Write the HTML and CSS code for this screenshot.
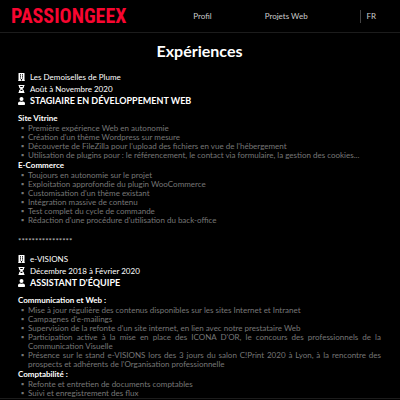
FILE: index.html
```html
<!DOCTYPE html>
<html lang="fr">
<head>
<meta charset="utf-8">
<meta name="viewport" content="width=device-width, initial-scale=1">
<title>PassionGeex</title>
<link rel="stylesheet" href="styles.css">
</head>
<body>
<svg class="sprite" aria-hidden="true">
  <symbol id="building" viewBox="0 0 448 512"><path fill-rule="evenodd" d="M436 480h-20V24c0-13-11-24-24-24H56C43 0 32 11 32 24v456H12c-7 0-12 5-12 12v20h448v-20c0-7-5-12-12-12zM128 76h64v64h-64zM256 76h64v64h-64zM128 180h64v64h-64zM256 180h64v64h-64zM128 284h64v64h-64zM256 284h64v64h-64zM186 384h76v96h-76z"/></symbol>
  <symbol id="hourglass" viewBox="0 0 384 512"><path fill-rule="evenodd" d="M360 0H24C11 0 0 11 0 24v16c0 13 11 24 24 24 0 91 51 167 121 192C75 281 24 357 24 448c-13 0-24 11-24 24v16c0 13 11 24 24 24h336c13 0 24-11 24-24v-16c0-13-11-24-24-24 0-91-51-167-121-192 70-25 121-101 121-192 13 0 24-11 24-24V24c0-13-11-24-24-24zM267 384H117c17-46 47-80 75-80s58 33 75 80zM267 128H117c-8-20-12-42-12-64h174c0 22-4 44-12 64z"/></symbol>
  <symbol id="user" viewBox="0 0 448 512"><path d="M224 256a128 128 0 1 0 0-256 128 128 0 0 0 0 256zm90 32h-17a174 174 0 0 1-146 0h-17C60 288 0 348 0 422v42c0 27 21 48 48 48h352c27 0 48-21 48-48v-42c0-74-60-134-134-134z"/></symbol>
</svg>
<header class="topbar">
  <a class="logo" href="#">PASSIONGEEX</a>
  <nav class="nav">
    <a href="#">Profil</a>
    <a href="#">Projets Web</a>
  </nav>
  <a class="lang" href="#">FR</a>
</header>
<main class="page">
  <h1>Expériences</h1>
  <section class="job">
    <p class="meta"><svg class="icon"><use href="#building"/></svg>Les Demoiselles de Plume</p>
    <p class="meta"><svg class="icon"><use href="#hourglass"/></svg>Août à Novembre 2020</p>
    <h2 class="role"><svg class="icon"><use href="#user"/></svg>STAGIAIRE EN DÉVELOPPEMENT WEB</h2>
    <div class="tasks">
      <h3>Site Vitrine</h3>
      <ul>
        <li>Première expérience Web en autonomie</li>
        <li>Création d'un thème Wordpress sur mesure</li>
        <li>Découverte de FileZilla pour l'upload des fichiers en vue de l'hébergement</li>
        <li>Utilisation de plugins pour : le référencement, le contact via formulaire, la gestion des cookies...</li>
      </ul>
      <h3>E-Commerce</h3>
      <ul>
        <li>Toujours en autonomie sur le projet</li>
        <li>Exploitation approfondie du plugin WooCommerce</li>
        <li>Customisation d'un thème existant</li>
        <li>Intégration massive de contenu</li>
        <li>Test complet du cycle de commande</li>
        <li>Rédaction d'une procédure d'utilisation du back-office</li>
      </ul>
    </div>
  </section>
  <p class="separator">****************</p>
  <section class="job">
    <p class="meta"><svg class="icon"><use href="#building"/></svg>e-VISIONS</p>
    <p class="meta"><svg class="icon"><use href="#hourglass"/></svg>Décembre 2018 à Février 2020</p>
    <h2 class="role"><svg class="icon"><use href="#user"/></svg>ASSISTANT D'ÉQUIPE</h2>
    <div class="tasks">
      <h3>Communication et Web :</h3>
      <ul>
        <li>Mise à jour régulière des contenus disponibles sur les sites Internet et Intranet</li>
        <li>Campagnes d'e-mailings</li>
        <li>Supervision de la refonte d'un site internet, en lien avec notre prestataire Web</li>
        <li>Participation active à la mise en place des ICONA D'OR, le concours des professionnels de la Communication Visuelle</li>
        <li>Présence sur le stand e-VISIONS lors des 3 jours du salon C!Print 2020 à Lyon, à la rencontre des prospects et adhérents de l'Organisation professionnelle</li>
      </ul>
      <h3>Comptabilité :</h3>
      <ul>
        <li>Refonte et entretien de documents comptables</li>
        <li>Suivi et enregistrement des flux</li>
      </ul>
    </div>
  </section>
</main>
<footer class="footer"></footer>
</body>
</html>
```

FILE: styles.css
```css
* {
  box-sizing: border-box;
  margin: 0;
  padding: 0;
}

body {
  display: flex;
  flex-direction: column;
  height: 100vh;
  overflow: hidden;
  background: #000;
  color: #fff;
  font: 8px/9px Lato, "Liberation Sans", sans-serif;
}

a {
  color: inherit;
  text-decoration: none;
}

.sprite {
  display: none;
}

.topbar {
  display: flex;
  flex: none;
  align-items: center;
  padding: 6px 24px 6px 11px;
  border-bottom: 1px solid #1c1c1c;
  color: #ccc;
}

.logo {
  color: #f80630;
  font: bold 20px/20px "Roboto Condensed", Roboto, sans-serif;
}

.nav {
  display: flex;
  flex: 1;
  justify-content: center;
  gap: 53px;
  padding-left: 14px;
}

.lang {
  padding: 2px 0 2px 5px;
  border-left: 1px solid #444;
}

.page {
  flex: 1;
  min-height: 0;
  overflow: hidden;
  padding: 8px 19px 0 18px;
}

h1 {
  margin-bottom: 10px;
  font-size: 16px;
  line-height: 20px;
  text-align: center;
}

.meta,
.role {
  display: flex;
  align-items: center;
  gap: 5px;
  line-height: 12px;
}

.role {
  font-size: 9px;
}

.icon {
  width: 7px;
  height: 8px;
  fill: #fff;
}

.tasks {
  padding-top: 6px;
}

h3 {
  font-size: 8px;
  line-height: 11px;
}

ul {
  padding-left: 10px;
  color: #777;
  list-style: "▪\a0\a0";
  text-align: justify;
}

.separator {
  padding: 12px 0 7px;
  color: #bbb;
}

.footer {
  flex: none;
  height: 2px;
  border-top: 1px solid #1c1c1c;
}
```
